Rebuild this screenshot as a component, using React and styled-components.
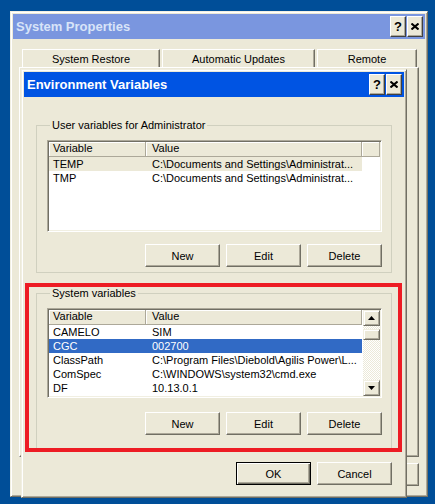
import styled, { createGlobalStyle } from 'styled-components';

const GlobalStyle = createGlobalStyle`
  * { box-sizing: border-box; }
  body {
    margin: 0;
    background: #004e98;
    font-family: 'Liberation Sans', Arial, sans-serif;
    font-size: 11px;
    color: #000;
  }
`;

const userVars = [
  { name: 'TEMP', value: 'C:\\Documents and Settings\\Administrat...', sel: 'grey' },
  { name: 'TMP', value: 'C:\\Documents and Settings\\Administrat...' },
];

const systemVars = [
  { name: 'CAMELO', value: 'SIM' },
  { name: 'CGC', value: '002700', sel: 'blue' },
  { name: 'ClassPath', value: 'C:\\Program Files\\Diebold\\Agilis Power\\L...' },
  { name: 'ComSpec', value: 'C:\\WINDOWS\\system32\\cmd.exe' },
  { name: 'DF', value: '10.13.0.1' },
];

const columns = [
  { label: 'Variable', width: 97, pad: 4 },
  { label: 'Value', width: 216, pad: 6 },
];

const Desktop = styled.div`
  position: relative;
  width: 435px;
  height: 504px;
  overflow: hidden;
  background: #004e98;
`;

const Window = styled.div`
  position: absolute;
  left: ${(p) => p.$x}px;
  top: ${(p) => p.$y}px;
  width: ${(p) => p.$w}px;
  height: ${(p) => p.$h}px;
  display: flex;
  flex-direction: column;
  padding: 2px;
  background: #ece9d8;
  border: 1px solid;
  border-color: #f1efe2 #716f64 #716f64 #f1efe2;
  box-shadow: inset 1px 1px #fff, inset -1px -1px #aca899;
`;

const TitleBar = styled.div`
  flex: none;
  height: 25px;
  display: flex;
  align-items: center;
  justify-content: space-between;
  padding: 0 2px 0 3px;
  background: ${(p) => (p.$active ? '#0054e3' : '#7a96df')};
  color: ${(p) => (p.$active ? '#fff' : '#d8e4f8')};
  font-weight: bold;
  font-size: 13px;
`;

const CaptionButtons = styled.div`
  display: flex;
  gap: 1px;
`;

const CaptionButton = styled.div`
  width: 16px;
  height: 21px;
  display: flex;
  align-items: center;
  justify-content: center;
  background: #ece9d8;
  color: #000;
  font-size: 13px;
  font-weight: bold;
  border: 1px solid;
  border-color: #fff #404040 #404040 #fff;
  box-shadow: inset -1px -1px #aca899;
`;

const Tabs = styled.div`
  flex: none;
  display: flex;
  gap: 2px;
  height: 18px;
  margin-top: 10px;
  padding-left: 9px;
`;

const Tab = styled.div`
  width: ${(p) => p.$w}px;
  display: flex;
  align-items: center;
  justify-content: center;
  padding-top: 1px;
  border: 1px solid;
  border-bottom: none;
  border-color: #fff #716f64 transparent #fff;
  box-shadow: inset -1px 0 #aca899;
`;

const TabPanel = styled.div`
  flex: 1;
  margin: 0 6px;
  border: 1px solid;
  border-color: #fff #716f64 #716f64 #fff;
  box-shadow: inset -1px -1px #aca899;
`;

const ButtonRow = styled.div`
  flex: none;
  display: flex;
  justify-content: flex-end;
  gap: 6px;
  margin: ${(p) => p.$margin || '0'};
`;

const Button = styled.div`
  width: 75px;
  height: 23px;
  display: flex;
  align-items: center;
  justify-content: center;
  background: #ece9d8;
  border: 1px solid;
  border-color: ${(p) => (p.$default ? '#000' : '#fff #716f64 #716f64 #fff')};
  box-shadow: ${(p) =>
    p.$default
      ? 'inset 1px 1px #fff, inset -1px -1px #716f64, inset -2px -2px #aca899'
      : 'inset -1px -1px #aca899'};
`;

const DialogBody = styled.div`
  flex: 1;
  display: flex;
  flex-direction: column;
  padding: 22px 12px 0;
`;

const Group = styled.fieldset`
  margin: ${(p) => p.$top || 0}px 0 0;
  padding: 8px 9px ${(p) => p.$bottom}px 10px;
  min-inline-size: 0;
  border: 1px solid #d0d0bf;
  display: flex;
  flex-direction: column;
  gap: ${(p) => p.$gap}px;
`;

const Legend = styled.legend`
  margin-left: 3px;
  padding: 0 2px;
  line-height: 13px;
`;

const ListView = styled.div`
  height: ${(p) => p.$h}px;
  display: flex;
  padding: 1px;
  background: #fff;
  border: 1px solid;
  border-color: #aca899 #fff #fff #aca899;
  box-shadow: inset 1px 1px #716f64, inset -1px -1px #f1efe2;
`;

const ListBody = styled.div`
  flex: 1;
  display: flex;
  flex-direction: column;
  overflow: hidden;
`;

const HeaderRow = styled.div`
  display: flex;
  height: 15px;
  flex: none;
`;

const HeaderCell = styled.div`
  width: ${(p) => (p.$w ? `${p.$w}px` : 'auto')};
  flex: ${(p) => (p.$w ? 'none' : '1')};
  padding-left: ${(p) => p.$pad || 0}px;
  line-height: 13px;
  background: #ece9d8;
  border-right: 1px solid #aca899;
  border-bottom: 1px solid #aca899;
  box-shadow: inset 1px 1px #fff;
  white-space: nowrap;
`;

const Row = styled.div`
  display: flex;
  height: 14px;
  line-height: 14px;
  width: 313px;
  flex: none;
  background: ${(p) => (p.$sel === 'blue' ? '#316ac5' : p.$sel === 'grey' ? '#ece9d8' : 'transparent')};
  color: ${(p) => (p.$sel === 'blue' ? '#fff' : '#000')};
`;

const Cell = styled.div`
  width: ${(p) => p.$w}px;
  flex: none;
  padding-left: ${(p) => p.$pad}px;
  white-space: nowrap;
  overflow: hidden;
`;

const ScrollBar = styled.div`
  width: 17px;
  flex: none;
  display: flex;
  flex-direction: column;
`;

const ScrollButton = styled.div`
  height: ${(p) => p.$h || 16}px;
  flex: none;
  display: flex;
  align-items: center;
  justify-content: center;
  margin-top: ${(p) => p.$offset || 0}px;
  background: #ece9d8;
  border: 1px solid;
  border-color: #f1efe2 #716f64 #716f64 #f1efe2;
  box-shadow: inset 1px 1px #fff, inset -1px -1px #aca899;
`;

const Track = styled.div`
  flex: 1;
  display: flex;
  flex-direction: column;
  background: repeating-conic-gradient(#ece9d8 0 25%, #fff 0 50%) 0 0 / 2px 2px;
`;

const Annotation = styled.div`
  position: absolute;
  left: 3px;
  top: 213px;
  width: 377px;
  height: 169px;
  border: 4px solid #ed1c24;
  pointer-events: none;
`;

const CloseGlyph = () => (
  <svg width="8" height="7" viewBox="0 0 8 7">
    <path d="M0.5 0.5 L7.5 6.5 M7.5 0.5 L0.5 6.5" stroke="#000" strokeWidth="2" />
  </svg>
);

const Arrow = ({ down }) => (
  <svg width="7" height="4" viewBox="0 0 7 4">
    <path d={down ? 'M0 0 H7 L3.5 4 Z' : 'M0 4 H7 L3.5 0 Z'} fill="#000" />
  </svg>
);

const Caption = ({ title, active }) => (
  <TitleBar $active={active}>
    <span>{title}</span>
    <CaptionButtons>
      <CaptionButton>?</CaptionButton>
      <CaptionButton>
        <CloseGlyph />
      </CaptionButton>
    </CaptionButtons>
  </TitleBar>
);

const VariableList = ({ rows, height, scroll }) => (
  <ListView $h={height}>
    <ListBody>
      <HeaderRow>
        {columns.map((c) => (
          <HeaderCell key={c.label} $w={c.width} $pad={c.pad}>
            {c.label}
          </HeaderCell>
        ))}
        {!scroll && <HeaderCell />}
      </HeaderRow>
      {rows.map((r) => (
        <Row key={r.name} $sel={r.sel}>
          <Cell $w={columns[0].width} $pad={columns[0].pad}>
            {r.name}
          </Cell>
          <Cell $w={columns[1].width} $pad={columns[1].pad}>
            {r.value}
          </Cell>
        </Row>
      ))}
    </ListBody>
    {scroll && (
      <ScrollBar>
        <ScrollButton>
          <Arrow />
        </ScrollButton>
        <Track>
          <ScrollButton $h={11} $offset={3} />
        </Track>
        <ScrollButton>
          <Arrow down />
        </ScrollButton>
      </ScrollBar>
    )}
  </ListView>
);

const ActionButtons = () => (
  <ButtonRow>
    <Button>New</Button>
    <Button>Edit</Button>
    <Button>Delete</Button>
  </ButtonRow>
);

export default function App() {
  return (
    <>
      <GlobalStyle />
      <Desktop>
        {/* parent window: its buttons sit under the dialog, only their edges show */}
        <Window $x={10} $y={11} $w={418} $h={486}>
          <Caption title="System Properties" />
          <Tabs>
            <Tab $w={138}>System Restore</Tab>
            <Tab $w={153}>Automatic Updates</Tab>
            <Tab $w={100}>Remote</Tab>
          </Tabs>
          <TabPanel />
          <ButtonRow $margin="6px 6px 8px">
            <Button />
            <Button />
            <Button />
          </ButtonRow>
        </Window>

        <Window $x={21} $y={69} $w={386} $h={429}>
          <Caption title="Environment Variables" active />
          <DialogBody>
            <Group $gap={12} $bottom={5}>
              <Legend>User variables for Administrator</Legend>
              <VariableList rows={userVars} height={92} />
              <ActionButtons />
            </Group>
            <Group $top={14} $gap={14} $bottom={13}>
              <Legend>System variables</Legend>
              <VariableList rows={systemVars} height={90} scroll />
              <ActionButtons />
            </Group>
            <ButtonRow $margin="13px 0 0">
              <Button $default>OK</Button>
              <Button>Cancel</Button>
            </ButtonRow>
          </DialogBody>
          <Annotation />
        </Window>
      </Desktop>
    </>
  );
}
